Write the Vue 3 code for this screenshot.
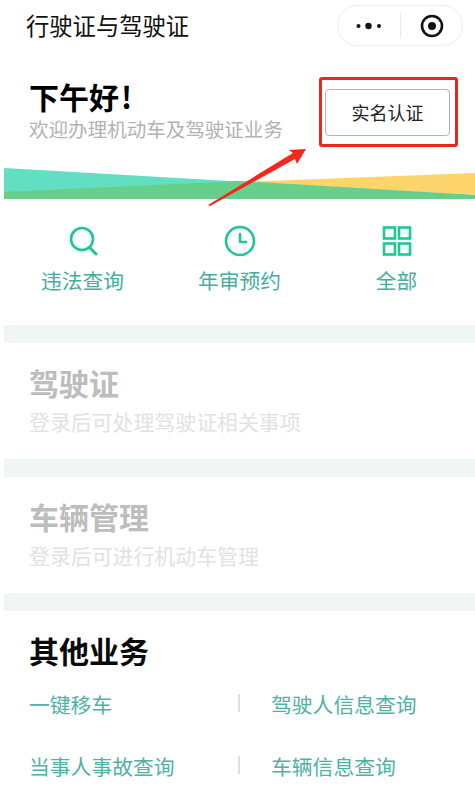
<script setup>
const shortcuts = [
  { label: '违法查询', icon: 'search' },
  { label: '年审预约', icon: 'clock' },
  { label: '全部', icon: 'grid' }
]
const locked = [
  { title: '驾驶证', desc: '登录后可处理驾驶证相关事项' },
  { title: '车辆管理', desc: '登录后可进行机动车管理' }
]
const others = ['一键移车', '驾驶人信息查询', '当事人事故查询', '车辆信息查询']
</script>

<template>
  <div class="page">
    <header class="nav">
      <span class="nav-title">行驶证与驾驶证</span>
      <div class="capsule">
        <svg class="dots" width="28" height="8" viewBox="0 0 28 8">
          <circle cx="3.5" cy="4" r="2" fill="#111" />
          <circle cx="13.5" cy="4" r="3.2" fill="#111" />
          <circle cx="24" cy="4" r="2" fill="#111" />
        </svg>
        <i class="capsule-line"></i>
        <svg width="24" height="24" viewBox="0 0 24 24">
          <circle cx="12" cy="12" r="10" fill="none" stroke="#111" stroke-width="2.6" />
          <circle cx="12" cy="12" r="4" fill="#111" />
        </svg>
      </div>
    </header>

    <section class="hero">
      <div class="hero-text">
        <h1>下午好<span class="bang">!</span></h1>
        <p>欢迎办理机动车及驾驶证业务</p>
      </div>
      <button class="verify">实名认证</button>
      <span class="red-box"></span>
    </section>

    <div class="band-wrap">
      <svg class="band" viewBox="0 0 471 31" preserveAspectRatio="none">
        <polygon points="0,0 471,27 471,31 0,31" fill="#62dfc2" />
        <polygon points="236,14 471,5 471,27" fill="#fed46c" />
        <polygon points="0,24 236,13 471,27 471,31 0,31" fill="#66cf8a" />
      </svg>
      <svg class="arrow" width="104" height="68" viewBox="0 0 104 68">
        <polygon points="0,64 85,12 81,9 98,8 89,23 87,18 2,65" fill="#f5261b" />
      </svg>
    </div>

    <nav class="shortcuts">
      <div v-for="s in shortcuts" :key="s.label" class="shortcut">
        <svg width="32" height="32" viewBox="0 0 32 32" fill="none" stroke="#1cc79a" stroke-width="2.6">
          <template v-if="s.icon === 'search'">
            <circle cx="15" cy="14" r="11" />
            <path d="M23 23l6 6" stroke-linecap="round" stroke-width="3" />
          </template>
          <template v-else-if="s.icon === 'clock'">
            <circle cx="16" cy="16" r="14" />
            <path d="M16 9v8h6" stroke-linecap="round" stroke-linejoin="round" />
          </template>
          <template v-else>
            <rect x="3" y="2.5" width="11" height="11" />
            <rect x="18" y="2.5" width="11" height="11" />
            <rect x="3" y="18.5" width="11" height="11" />
            <rect x="18" y="18.5" width="11" height="11" />
          </template>
        </svg>
        <span>{{ s.label }}</span>
      </div>
    </nav>

    <template v-for="l in locked" :key="l.title">
      <div class="divider"></div>
      <section class="locked">
        <h2>{{ l.title }}</h2>
        <p>{{ l.desc }}</p>
      </section>
    </template>

    <div class="divider"></div>
    <section class="other">
      <h2>其他业务</h2>
      <ul class="other-grid">
        <li v-for="o in others" :key="o">{{ o }}</li>
      </ul>
    </section>
  </div>
</template>

<style scoped>
.page {
  width: 475px;
  height: 788px;
  overflow: hidden;
  box-sizing: border-box;
  padding-left: 4px;
  background: #fff;
  font-family: "Noto Sans CJK SC", "Noto Sans", sans-serif;
}
.nav {
  height: 50px;
  display: flex;
  align-items: center;
  justify-content: space-between;
  padding: 0 12px 0 22px;
}
.nav-title {
  font-size: 23.3px;
  color: #111;
  line-height: 50px;
}
.capsule {
  width: 126px;
  height: 41px;
  box-sizing: border-box;
  border: 1px solid #eeeeee;
  border-radius: 21px;
  display: flex;
  align-items: center;
  margin-top: 1px;
  padding-left: 17px;
}
.capsule-line {
  width: 1px;
  height: 25px;
  background: #e8e8e8;
  margin: 0 19px 0 17px;
}
.hero {
  position: relative;
  height: 118px;
  display: flex;
  justify-content: space-between;
  padding: 0 25px 0 25px;
}
.hero-text h1 {
  margin: 28px 0 0;
  font-size: 30px;
  line-height: 36px;
  font-weight: 700;
  color: #000;
}
.bang {
  margin-left: 2px;
}
.hero-text p {
  margin: 2px 0 0;
  font-size: 19.55px;
  line-height: 26px;
  color: #b2b2b2;
  white-space: nowrap;
}
.verify {
  width: 125px;
  height: 47px;
  margin-top: 39px;
  padding: 0 0 2px;
  background: #fff;
  border: 1px solid #b4b4b4;
  border-radius: 4px;
  font: inherit;
  font-size: 18px;
  color: #222;
}
.red-box {
  position: absolute;
  left: 315px;
  top: 27px;
  width: 139px;
  height: 70px;
  box-sizing: border-box;
  border: 3px solid #e8281e;
  border-radius: 3px;
}
.band-wrap {
  position: relative;
  height: 31px;
}
.band {
  display: block;
  width: 471px;
  height: 31px;
}
.arrow {
  position: absolute;
  left: 204px;
  top: -27px;
}
.shortcuts {
  height: 126px;
  display: grid;
  grid-template-columns: 157px 157px 157px;
}
.shortcut {
  display: flex;
  flex-direction: column;
  align-items: center;
  padding-top: 26px;
  color: #47ad9d;
  font-size: 20.7px;
}
.shortcut span {
  margin-top: 8px;
  line-height: 30px;
}
.divider {
  height: 18px;
  background: #f0f5f5;
}
.locked {
  height: 116px;
  box-sizing: border-box;
  padding: 18px 0 0 25px;
}
.locked h2 {
  margin: 0;
  font-size: 30px;
  line-height: 42px;
  font-weight: 700;
  color: #bdbdbd;
}
.locked p {
  margin: 3px 0 0;
  font-size: 20.9px;
  line-height: 30px;
  color: #e2e2e2;
}
.other {
  padding: 17px 0 0 25px;
}
.other h2 {
  margin: 0;
  font-size: 30px;
  line-height: 44px;
  font-weight: 700;
  color: #0a0a0a;
}
.other-grid {
  list-style: none;
  margin: 17px 0 0;
  padding: 0;
  display: grid;
  grid-template-columns: 209px 1fr;
  row-gap: 32px;
  font-size: 20.8px;
  line-height: 30px;
  color: #4fb3a4;
}
.other-grid li {
  position: relative;
}
.other-grid li:nth-child(even) {
  padding-left: 33px;
}
.other-grid li:nth-child(even)::before {
  content: "";
  position: absolute;
  left: 0;
  top: 5px;
  width: 2px;
  height: 18px;
  background: #e0e0e0;
}
</style>
